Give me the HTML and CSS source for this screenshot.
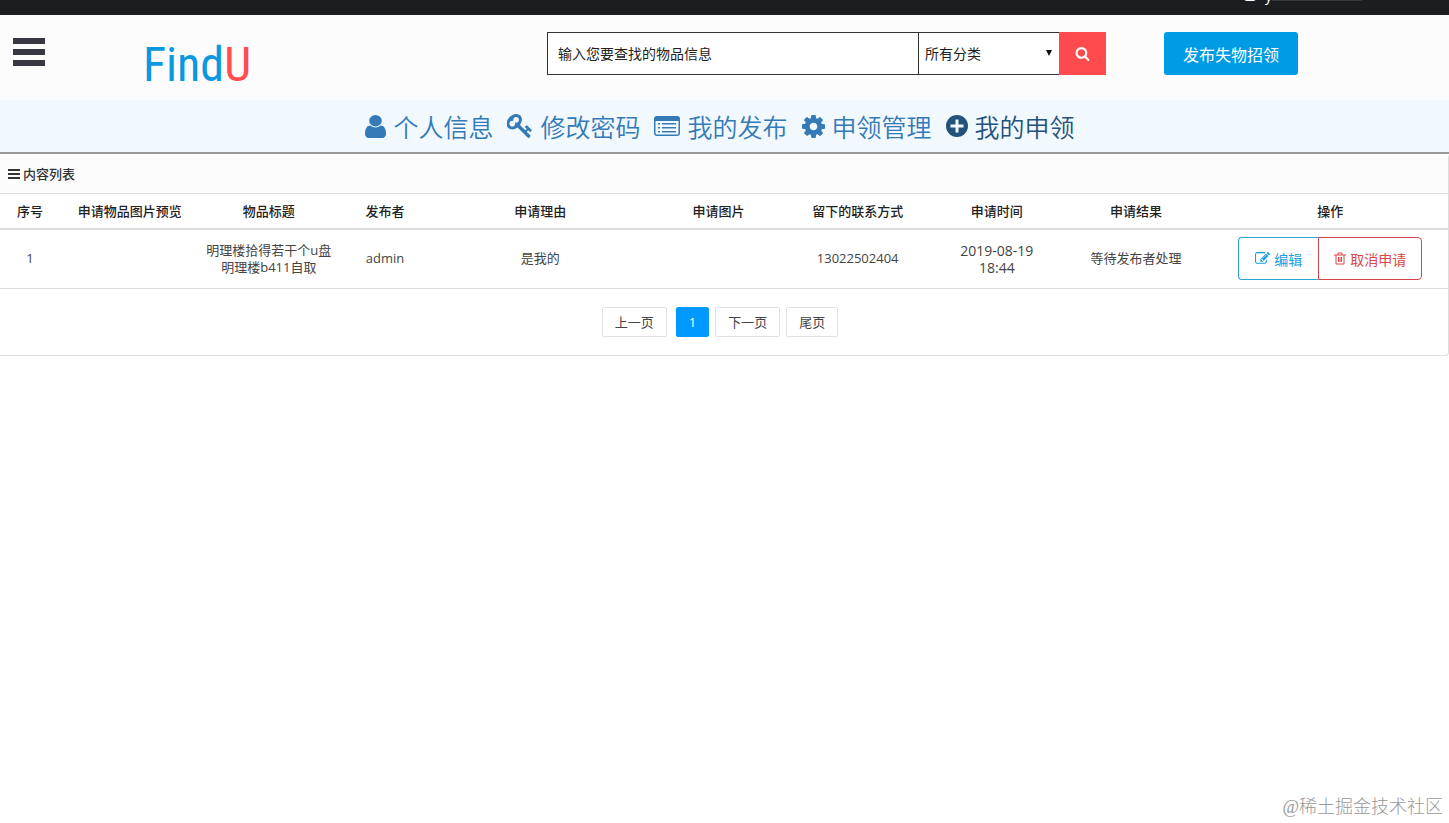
FILE: index.html
```html
<!DOCTYPE html>
<html lang="zh-CN">
<head>
    <meta charset="UTF-8">
    <meta name="viewport" content="width=device-width, initial-scale=1.0">
    <title>FindU 我的申领</title>
    <link rel="stylesheet" href="styles.css">
</head>
<body>

    <div class="topbar">
        <a href="#" class="account"><span class="account-icon"></span>y<span class="account-rest"></span></a>
    </div>

    <header class="header">
        <button class="menu-btn" aria-label="菜单"><span></span><span></span><span></span></button>
        <a href="#" class="logo">Find<span>U</span></a>
        <form class="search">
            <input type="text" placeholder="输入您要查找的物品信息" aria-label="物品信息">
            <div class="select-wrap">
                <select aria-label="分类">
                    <option>所有分类</option>
                </select>
            </div>
            <button type="button" aria-label="搜索">
                <svg viewBox="0 0 1792 1792" width="15" height="15"><path d="M1216 832q0-185-131.500-316.500t-316.500-131.500-316.500 131.500-131.500 316.500 131.500 316.500 316.500 131.500 316.500-131.500 131.500-316.500zm512 832q0 52-38 90t-90 38q-54 0-90-38l-343-342q-179 124-399 124-143 0-273.500-55.500t-225-150-150-225-55.500-273.500 55.500-273.500 150-225 225-150 273.500-55.500 273.500 55.500 225 150 150 225 55.500 273.500q0 220-124 399l343 343q37 37 37 90z"/></svg>
            </button>
        </form>
        <button class="publish">发布失物招领</button>
    </header>

    <nav class="nav">
        <a href="#">
            <svg viewBox="256 128 1280 1536" width="21" height="23" preserveAspectRatio="none"><path d="M1536 1399q0 109-62.500 187t-150.500 78h-854q-88 0-150.500-78t-62.500-187q0-85 8.500-160.500t31.500-152 58.500-131 94-89 134.500-34.500q131 128 313 128t313-128q76 0 134.500 34.500t94 89 58.500 131 31.500 152 8.500 160.500zm-256-887q0 159-112.500 271.500t-271.500 112.500-271.500-112.500-112.500-271.500 112.500-271.500 271.500-112.500 271.500 112.500 112.500 271.500z"/></svg>
            个人信息
        </a>
        <a href="#">
            <svg viewBox="64 128 1664 1664" width="26" height="25"><path d="M832 512q0-80-56-136t-136-56-136 56-56 136q0 42 19 83-41-19-83-19-80 0-136 56t-56 136 56 136 136 56 136-56 56-136q0-42-19-83 41 19 83 19 80 0 136-56t56-136zm851 704q0 17-49 66t-66 49q-9 0-28.500-16t-36.500-33-38.500-40-24.500-26l-96 96 220 220q28 28 28 68 0 42-39 81t-81 39q-40 0-68-28l-671-671q-176 131-365 131-163 0-265.500-102.500t-102.500-265.500q0-160 95-313t248-248 313-95q163 0 265.500 102.500t102.500 265.500q0 189-131 365l355 355 96-96q-3-3-26-24.500t-40-38.500-33-36.500-16-28.500q0-17 49-66t66-49q13 0 23 10 6 6 46 44.500t82 79.500 86.500 86 73 78 28.500 41z"/></svg>
            修改密码
        </a>
        <a href="#">
            <svg viewBox="0 0 26 22" width="26" height="22"><path fill-rule="evenodd" d="M3 1h20q3 0 3 3v14q0 3-3 3H3q-3 0-3-3V4q0-3 3-3zM1.500 6v12q0 1.500 1.500 1.500h20q1.500 0 1.500-1.500V6zM4 8h2v1.500H4zM8 8h14v1.500H8zM4 12h2v1.500H4zM8 12h14v1.500H8zM4 16h2v1.500H4zM8 16h14v1.500H8z"/></svg>
            我的发布
        </a>
        <a href="#">
            <svg viewBox="128 128 1536 1536" width="23" height="23"><path d="M1152 896q0-106-75-181t-181-75-181 75-75 181 75 181 181 75 181-75 75-181zm512-109v222q0 12-8 23t-20 13l-185 28q-19 54-39 91 35 50 107 138 10 12 10 25t-9 23q-27 37-99 108t-94 71q-12 0-26-9l-138-108q-44 23-91 38-16 136-29 186-7 28-36 28h-222q-14 0-24.500-8.500t-11.500-21.500l-28-184q-49-16-90-37l-141 107q-10 9-25 9-14 0-25-11-126-114-165-168-7-10-7-23 0-12 8-23 15-21 51-66.500t54-70.500q-27-50-41-99l-183-27q-13-2-21-12.500t-8-23.500v-222q0-12 8-23t19-13l186-28q14-46 39-92-40-57-107-138-10-12-10-24 0-10 9-23 26-36 98.500-107.500t94.500-71.500q13 0 26 10l138 107q44-23 91-38 16-136 29-186 7-28 36-28h222q14 0 24.500 8.500t11.500 21.500l28 184q49 16 90 37l142-107q9-9 24-9 13 0 25 10 129 119 165 170 7 8 7 22 0 12-8 23-15 21-51 66.500t-54 70.500q26 50 41 98l183 28q13 2 21 12.500t8 23.500z"/></svg>
            申领管理
        </a>
        <a href="#" class="active">
            <svg viewBox="0 0 22 22" width="22" height="22"><path fill-rule="evenodd" d="M11 0a11 11 0 1 1 0 22a11 11 0 1 1 0-22zM9.500 4.500v5h-5v3h5v5h3v-5h5v-3h-5v-5z"/></svg>
            我的申领
        </a>
    </nav>

    <main class="panel">
        <h2 class="panel-heading">
            <svg viewBox="0 0 12 10" width="12" height="10"><path d="M0 0h12v2H0zM0 4h12v2H0zM0 8h12v2H0z"/></svg>
            内容列表
        </h2>
        <table class="list">
            <colgroup>
                <col class="c-no"><col class="c-mid"><col class="c-mid"><col class="c-user"><col class="c-reason">
                <col class="c-mid"><col class="c-mid"><col class="c-mid"><col class="c-mid"><col class="c-action">
            </colgroup>
            <thead>
                <tr>
                    <th>序号</th>
                    <th>申请物品图片预览</th>
                    <th>物品标题</th>
                    <th>发布者</th>
                    <th>申请理由</th>
                    <th>申请图片</th>
                    <th>留下的联系方式</th>
                    <th>申请时间</th>
                    <th>申请结果</th>
                    <th class="action">操作</th>
                </tr>
            </thead>
            <tbody>
                <tr>
                    <td>1</td>
                    <td></td>
                    <td>明理楼拾得若干个u盘<br>明理楼b411自取</td>
                    <td>admin</td>
                    <td>是我的</td>
                    <td></td>
                    <td>13022502404</td>
                    <td class="time">2019-08-19<br>18:44</td>
                    <td>等待发布者处理</td>
                    <td class="action">
                        <div class="btn-group">
                            <button class="edit">
                                <svg viewBox="0 128 1792 1536" width="15" height="13"><path d="M888 1184l116-116-152-152-116 116v56h96v96h56zm440-720q-16-16-33 1l-350 350q-17 17-1 33t33-1l350-350q17-17 1-33zm80 594v190q0 119-84.500 203.500t-203.500 84.500h-832q-119 0-203.500-84.500t-84.500-203.500v-832q0-119 84.500-203.500t203.500-84.500h832q63 0 117 25 15 7 18 23 3 17-9 29l-49 49q-14 14-32 8-23-6-45-6h-832q-66 0-113 47t-47 113v832q0 66 47 113t113 47h832q66 0 113-47t47-113v-126q0-13 9-22l64-64q15-15 35-7t20 29zm-96-738l288 288-672 672h-288v-288zm444 132l-92 92-288-288 92-92q28-28 68-28t68 28l152 152q28 28 28 68t-28 68z"/></svg>
                                编辑
                            </button>
                            <button class="cancel">
                                <svg viewBox="0 0 12 13" width="12" height="13"><path class="line" d="M0 3h12M4 3V1h4v2M2 3v9h8V3M4.500 5v5M6 5v5M7.500 5v5"/></svg>
                                取消申请
                            </button>
                        </div>
                    </td>
                </tr>
            </tbody>
        </table>
        <div class="pagination">
            <a href="#">上一页</a>
            <a href="#" class="current">1</a>
            <a href="#">下一页</a>
            <a href="#">尾页</a>
        </div>
    </main>

    <footer class="watermark">@稀土掘金技术社区</footer>

</body>
</html>
```
FILE: styles.css
```css
* {
    box-sizing: border-box;
}
body {
    margin: 0;
    min-height: 100vh;
    display: flex;
    flex-direction: column;
    font-family: "Open Sans", "Noto Sans CJK SC", sans-serif;
    font-size: 13px;
    color: #444;
    background-color: #fff;
}
a {
    text-decoration: none;
}
button, input, select {
    font-family: inherit;
    margin: 0;
}
svg {
    fill: currentColor;
    flex: none;
}
.topbar {
    display: flex;
    justify-content: flex-end;
    height: 15px;
    padding-right: 87px;
    overflow: hidden;
    background-color: #1b1e21;
}
.account {
    display: flex;
    align-items: flex-start;
    margin-top: -14px;
    font-size: 14px;
    line-height: 20px;
    color: #fff;
}
.account-icon {
    width: 12px;
    height: 11px;
    margin: 4px 9px 0 0;
    border-radius: 3px;
    background-color: #fff;
}
.account-rest {
    width: 90px;
    height: 1px;
    margin-top: 14px;
    background-color: #34373a;
}

/* header */
.header {
    display: flex;
    align-items: flex-start;
    height: 85px;
    padding: 17px 13px 0;
    background-color: #fcfcfd;
}
.menu-btn {
    display: flex;
    flex-direction: column;
    gap: 5px;
    width: 32px;
    padding: 6px 0 0;
    border: 0;
    background: none;
}
.menu-btn span {
    width: 32px;
    height: 6px;
    background-color: #373843;
}
.logo {
    margin-left: 98px;
    width: 404px;
    font-family: "Roboto Condensed", "Roboto", sans-serif;
    font-size: 48px;
    line-height: 66px;
    color: #0a98e0;
}
.logo span {
    color: #ff4c4f;
}
.search {
    display: flex;
    width: 559px;
    height: 43px;
}
.search input {
    width: 372px;
    padding: 0 10px;
    border: 1px solid #333;
    border-radius: 0;
    font-size: 14px;
    background-color: #fff;
}
.search input::placeholder {
    color: #222;
}
.select-wrap {
    position: relative;
    width: 140px;
}
.select-wrap::after {
    content: "";
    position: absolute;
    right: 7px;
    top: 18px;
    border: 3px solid transparent;
    border-top: 6px solid #111;
    border-bottom: 0;
}
.search select {
    appearance: none;
    width: 100%;
    height: 100%;
    padding: 0 6px;
    border: solid #333;
    border-width: 1px 0;
    border-radius: 0;
    font-size: 14px;
    color: #222;
    background-color: #fff;
}
.search button {
    display: flex;
    align-items: center;
    justify-content: center;
    width: 47px;
    border: 0;
    color: #fff;
    background-color: #ff4b4d;
}
.publish {
    width: 134px;
    height: 43px;
    margin-left: 58px;
    padding: 0;
    border: 0;
    border-radius: 3px;
    font-size: 16px;
    color: #fff;
    background-color: #009be5;
}

/* nav */
.nav {
    display: flex;
    justify-content: center;
    gap: 14px;
    height: 54px;
    padding-right: 9px;
    border-bottom: 2px solid #999;
    background-color: #f1f8fe;
}
.nav a {
    display: flex;
    align-items: center;
    gap: 7px;
    font-size: 25px;
    font-weight: 350;
    color: #337ab7;
}
.nav .active {
    color: #23527c;
}

/* list */
.panel {
    border: 1px solid #ddd;
    border-width: 0 1px 1px 0;
    border-radius: 0 4px 4px 0;
}
.panel-heading {
    display: flex;
    align-items: center;
    gap: 3px;
    height: 40px;
    margin: 0;
    padding-left: 8px;
    border-bottom: 1px solid #ddd;
    font-size: 13px;
    font-weight: 500;
    color: #333;
    background-color: #fcfcfc;
}
.list {
    width: 100%;
    table-layout: fixed;
    border-collapse: collapse;
    text-align: center;
    line-height: 17px;
}
.c-no {
    width: 60px;
}
.c-mid {
    width: 139px;
}
.c-user {
    width: 93px;
}
.c-reason {
    width: 217px;
}
.c-action {
    width: 242px;
}
.list th {
    height: 35px;
    padding: 0;
    border-bottom: 2px solid #ddd;
    font-weight: 500;
    color: #222;
}
.list td {
    height: 59px;
    padding: 0;
    border-bottom: 1px solid #ddd;
}
.list .time {
    font-size: 14px;
}
.list .action {
    padding-left: 7px;
}
.btn-group {
    display: flex;
    justify-content: center;
}
.btn-group button {
    display: flex;
    align-items: center;
    justify-content: center;
    gap: 4px;
    height: 43px;
    padding: 0;
    border: 1px solid;
    font-size: 14px;
    background-color: #fff;
}
.btn-group .edit {
    width: 80px;
    border-color: #28a4d8;
    border-right: 0;
    border-radius: 4px 0 0 4px;
    color: #1b9de2;
}
.btn-group .cancel {
    width: 104px;
    border-color: #d9434b;
    border-radius: 0 4px 4px 0;
    color: #dd4447;
}
.line {
    fill: none;
    stroke: currentColor;
}
.pagination {
    display: flex;
    justify-content: center;
    gap: 6px;
    padding: 18px 8px 18px 0;
}
.pagination a {
    height: 30px;
    padding: 0 12px;
    border: 1px solid #e2e2e2;
    border-radius: 2px;
    line-height: 28px;
    color: #444;
}
.pagination .current {
    margin-left: 3px;
    border-color: #0099ff;
    color: #fff;
    background-color: #0099ff;
}
.watermark {
    margin-top: auto;
    padding: 0 6px 3px 0;
    text-align: right;
    font-family: "Liberation Serif", "Noto Sans CJK SC", serif;
    font-size: 18px;
    font-weight: 300;
    line-height: 26px;
    color: #999;
}
```
